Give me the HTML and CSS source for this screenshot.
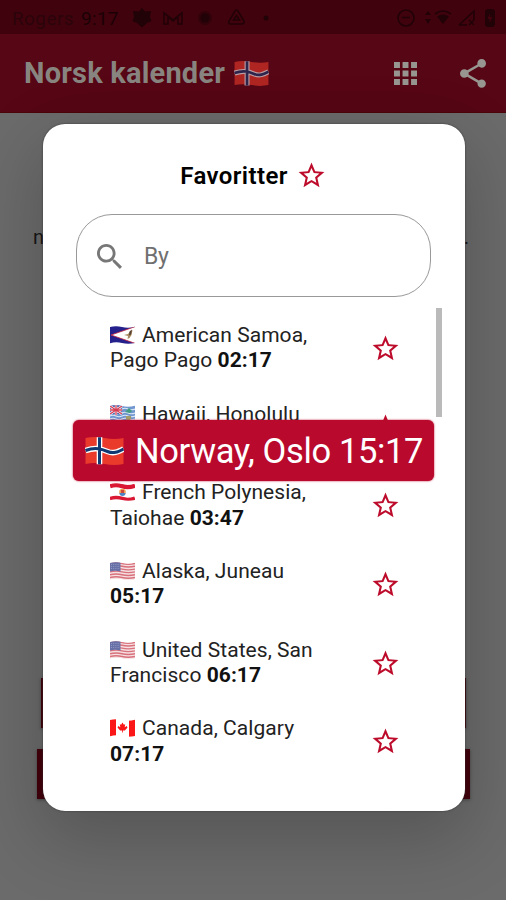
FILE: index.html
```
<!DOCTYPE html>
<html lang="no">

<head>
    <meta charset="UTF-8">
    <meta name="viewport" content="width=device-width, initial-scale=1.0">
    <title>Norsk kalender</title>
    <link rel="stylesheet" href="styles.css">
</head>

<body>
    <!-- Shared icons and flags -->
    <svg class="defs" width="0" height="0">
        <symbol id="star" viewBox="0 0 24 24">
            <path d="M22 9.24l-7.19-.62L12 2 9.19 8.63 2 9.24l5.46 4.73L5.82 21 12 17.27 18.18 21l-1.63-7.03L22 9.24zM12 15.4l-3.76 2.27 1-4.28-3.32-2.88 4.38-.38L12 6.1l1.71 4.04 4.38.38-3.32 2.88 1 4.28L12 15.4z"/>
        </symbol>
        <clipPath id="wave">
            <path d="M0 1Q6 -.5 12 1T25 .8V17Q18 18.5 12 17T0 17.200z"/>
        </clipPath>
        <symbol id="norway" viewBox="0 0 38 28">
            <path fill="#e93a2c" d="M0 1Q9 -.8 19 1T38 1V27Q29 28.800 19 27T0 27z"/>
            <path fill="none" stroke="#fff" stroke-width="5.600" d="M14 .2V27.300M0 13.500C10 10 16 12 22 14.500S32 15 38 12"/>
            <path fill="none" stroke="#123a72" stroke-width="3" d="M14 .2V27.300M0 13.500C10 10 16 12 22 14.500S32 15 38 12"/>
        </symbol>
        <symbol id="samoa" viewBox="0 0 25 18">
            <g clip-path="url(#wave)">
                <path fill="#24208c" d="M0 0h25v18H0z"/>
                <path fill="#fff" stroke="#c4223c" stroke-width=".8" d="M1 9L25.500 .5V17.500z"/>
                <path fill="#a98a63" d="M14 9l4-1 2.500-3 2-1-1 5-2 3-2 1 .5-3z"/>
                <path fill="#574231" d="M19.500 5.500l2.500-2-1 5-2 1z"/>
            </g>
        </symbol>
        <symbol id="hawaii" viewBox="0 0 25 18">
            <g clip-path="url(#wave)">
                <path fill="#7096cf" d="M0 0h25v18H0z"/>
                <path fill="none" stroke="#dce8f5" stroke-width="1.200" d="M0 11q3-1.500 6 0t6 0 6 0 7 0M0 14q3-1.500 6 0t6 0 6 0 7 0M12 4q3-1.500 6 0t7 0M12 8q3-1.500 6 0t7 0"/>
                <path fill="#3e4c98" d="M0 0h12v9H0z"/>
                <path fill="none" stroke="#fff" stroke-width="2.500" d="M0 1l12 8M12 1L0 9M6 0v10M0 5h12"/>
                <path fill="none" stroke="#d63c52" stroke-width="1.300" d="M0 1l12 8M12 1L0 9M6 0v10M0 5h12"/>
                <path fill="#409d81" d="M15 7l4-4 3 3-2 2z"/>
                <path fill="#a59d69" d="M16 11h5v3l-2.500 2-2.500-2z"/>
            </g>
        </symbol>
        <symbol id="polynesia" viewBox="0 0 25 18">
            <g clip-path="url(#wave)">
                <path fill="#fff" d="M0 0h25v18H0z"/>
                <path fill="none" stroke="#da1833" stroke-width="4.500" d="M0 3q6-2 12 0t13-.5M0 16q6-2 12 0t13-.5"/>
                <circle cx="12.500" cy="9" r="3.300" fill="#f1a252"/>
                <path fill="#4f83c4" d="M9.500 10h6a3 3 0 0 1-6 0z"/>
                <path fill="#cf493b" d="M11 7h3v3h-3z"/>
            </g>
        </symbol>
        <symbol id="usa" viewBox="0 0 25 18">
            <g clip-path="url(#wave)">
                <path fill="#f5dfe1" d="M0 0h25v18H0z"/>
                <path fill="none" stroke="#d8717c" stroke-width="1.400" d="M0 1.500q6-1.500 12 0t13 0M0 4.300q6-1.500 12 0t13 0M0 7.100q6-1.500 12 0t13 0M0 9.900q6-1.500 12 0t13 0M0 12.700q6-1.500 12 0t13 0M0 15.500q6-1.500 12 0t13 0M0 18q6-1.500 12 0t13 0"/>
                <path fill="#6770a7" d="M0 0h10.500v9.500Q5 8 0 9.500z"/>
                <path stroke="#a3a9cd" stroke-width=".7" stroke-dasharray="1 1.200" d="M1 2.500h9M1 4.500h9M1 6.500h9"/>
            </g>
        </symbol>
        <symbol id="canada" viewBox="0 0 25 18">
            <g clip-path="url(#wave)">
                <path fill="#fff" d="M0 0h25v18H0z"/>
                <path fill="#fb1717" d="M0 0h6v18H0zM19 0h6v18h-6zM12.500 3.500l1.400 2.300 1.300-.5-.5 3 2-1.200.8 1.400-2.600 3-2 .1v2h-.8v-2l-2-.1-2.600-3 .8-1.400 2 1.200-.5-3 1.300.5z"/>
            </g>
        </symbol>
    </svg>

    <div class="screen">
        <div class="status-bar">
            <span class="carrier">Rogers</span>
            <span class="clock">9:17</span>
            <svg class="notifications" viewBox="0 0 140 20">
                <path d="M10 0l3 3.500 6-.5-1 6 1.500 4-4.500 2-5 4.500L5 15l-4.500-2L2 9 1 3l6 .5z"/>
                <path class="line" d="M32 16V5l9 7 9-7v11h-4V9l-5 4-5-4v7z"/>
                <circle cx="73" cy="10" r="7" opacity=".45"/>
                <circle cx="73" cy="10" r="4.500"/>
                <path class="line" d="M103 3q1.500-2 3 0l6 10q.5 3-2 3H99q-3 0-2-3zM104.500 7.500l3 4.500h-6z"/>
                <circle cx="134" cy="10" r="2.500"/>
            </svg>
            <svg class="system" viewBox="0 0 100 20">
                <circle class="line" cx="9" cy="10" r="8"/>
                <path class="line" d="M5 9.500h8"/>
                <path d="M28 7l3-4 3 4zM28 11h6l-3 5z"/>
                <path class="line" d="M38 6q8-6 16 0"/>
                <path d="M40 8.500q6-4 12 0L46 16z"/>
                <path class="line" d="M62 17L77 3v9M62 17h8M72 12l5 5M77 12l-5 5"/>
                <rect x="88" y="1" width="10" height="18" rx="3"/>
                <path fill="#40030d" d="M93 5l-2.500 6H92.500v4l3-6H93z"/>
            </svg>
        </div>

        <header class="app-bar">
            <h1>Norsk kalender</h1>
            <svg class="app-flag"><use href="#norway"/></svg>
            <svg class="apps" viewBox="0 0 24 24">
                <path d="M0 0h6.200v6.200H0zM8.900 0h6.200v6.200H8.900zM17.800 0H24v6.200h-6.200zM0 8.900h6.200v6.200H0zM8.900 8.900h6.200v6.200H8.900zM17.800 8.900H24v6.200h-6.200zM0 17.800h6.200V24H0zM8.900 17.800h6.200V24H8.900zM17.800 17.800H24V24h-6.200z"/>
            </svg>
            <svg class="share" viewBox="3 2 18 20">
                <path d="M18 16.080c-.76 0-1.440.3-1.960.77L8.910 12.700c.05-.23.090-.46.090-.7s-.04-.47-.09-.7l7.050-4.110c.54.5 1.250.81 2.040.81 1.660 0 3-1.340 3-3s-1.340-3-3-3-3 1.340-3 3c0 .24.040.47.090.7L8.040 9.810C7.500 9.310 6.790 9 6 9c-1.660 0-3 1.340-3 3s1.340 3 3 3c.79 0 1.500-.31 2.040-.81l7.120 4.160c-.05.21-.08.43-.08.65 0 1.610 1.310 2.920 2.920 2.920s2.920-1.310 2.920-2.920-1.310-2.920-2.920-2.920z"/>
            </svg>
        </header>

        <main class="page">
            <div class="page-text"><span>n</span><span>.</span></div>
            <div class="page-button small"></div>
            <div class="page-button"></div>
        </main>
    </div>

    <div class="dialog">
        <h2>Favoritter <svg class="star"><use href="#star"/></svg></h2>
        <div class="search">
            <svg viewBox="3 3 17.500 17.500">
                <path d="M15.500 14h-.79l-.28-.27C15.410 12.590 16 11.110 16 9.500 16 5.910 13.090 3 9.500 3S3 5.910 3 9.500 5.910 16 9.500 16c1.610 0 3.090-.59 4.230-1.570l.27.28v.79l5 4.990L20.490 19l-4.990-5zm-6 0C7.010 14 5 11.990 5 9.500S7.010 5 9.500 5 14 7.010 14 9.500 11.990 14 9.500 14z"/>
            </svg>
            <span>By</span>
        </div>
        <div class="list">
            <ul>
                <li>
                    <p><svg class="flag"><use href="#samoa"/></svg>American Samoa,<br>Pago Pago <b>02:17</b></p>
                    <svg class="star"><use href="#star"/></svg>
                </li>
                <li>
                    <p><svg class="flag"><use href="#hawaii"/></svg>Hawaii, Honolulu<br>&nbsp;</p>
                    <svg class="star"><use href="#star"/></svg>
                </li>
                <li>
                    <p><svg class="flag"><use href="#polynesia"/></svg>French Polynesia,<br>Taiohae <b>03:47</b></p>
                    <svg class="star"><use href="#star"/></svg>
                </li>
                <li>
                    <p><svg class="flag"><use href="#usa"/></svg>Alaska, Juneau<br><b>05:17</b></p>
                    <svg class="star"><use href="#star"/></svg>
                </li>
                <li>
                    <p><svg class="flag"><use href="#usa"/></svg>United States, San<br>Francisco <b>06:17</b></p>
                    <svg class="star"><use href="#star"/></svg>
                </li>
                <li>
                    <p><svg class="flag"><use href="#canada"/></svg>Canada, Calgary<br><b>07:17</b></p>
                    <svg class="star"><use href="#star"/></svg>
                </li>
            </ul>
            <div class="scrollbar"></div>
        </div>
    </div>

    <div class="toast">
        <svg><use href="#norway"/></svg>
        <span>Norway, Oslo 15:17</span>
    </div>
</body>

</html>
```
FILE: styles.css
```
* {
    box-sizing: border-box;
}

body {
    position: relative;
    width: 506px;
    height: 900px;
    margin: 0;
    overflow: hidden;
    font-family: Roboto, sans-serif;
    background-color: #6b6b6b;
}

svg {
    display: block;
    flex: none;
}

.defs {
    position: absolute;
}

h1,
h2,
p,
ul {
    margin: 0;
    padding: 0;
}

/* Dimmed page behind the dialog */
.status-bar {
    display: flex;
    align-items: center;
    height: 34px;
    padding: 2px 9px 0 12px;
    background-color: #40030d;
    color: #1b0105;
    fill: #200207;
    font-size: 19px;
}

.carrier {
    width: 69px;
    color: #2b030a;
    letter-spacing: 0.4px;
}

.clock {
    width: 51px;
    letter-spacing: 0.3px;
}

.notifications {
    width: 140px;
    height: 20px;
}

.system {
    width: 100px;
    height: 20px;
    margin-left: auto;
}

.line {
    fill: none;
    stroke: #200207;
    stroke-width: 1.6;
}

.app-bar {
    display: flex;
    align-items: center;
    height: 79px;
    padding: 0 20px 0 24px;
    background-color: #560615;
    border-bottom: 1px solid #4c0508;
    color: #888580;
    fill: #989690;
}

.app-bar h1 {
    width: 210px;
    font-size: 29px;
    font-weight: 700;
    letter-spacing: 0.2px;
    white-space: nowrap;
}

.app-flag {
    width: 35px;
    height: 25px;
    opacity: 0.6;
}

.apps {
    width: 23px;
    height: 23px;
    margin-left: auto;
}

.share {
    width: 26px;
    height: 29px;
    margin-left: 43px;
}

.page {
    padding-top: 112px;
}

.page-text {
    display: flex;
    justify-content: space-between;
    height: 453px;
    padding: 0 37px 0 33px;
    color: #171717;
    font-size: 20px;
}

.page-button {
    height: 50px;
    margin: 0 36px 0 37px;
    background-color: #42000c;
    box-shadow: 0 1px 3px #444;
}

.page-button.small {
    margin: 0 40px 21px 41px;
}

/* Favourites dialog */
.dialog {
    position: absolute;
    top: 124px;
    left: 43px;
    width: 422px;
    height: 687px;
    padding: 35px 23px 0 33px;
    border-radius: 22px;
    background-color: #fff;
    box-shadow: 0 0 2px #333, 0 25px 70px 5px rgba(0, 0, 0, 0.2);
}

.star {
    width: 31px;
    height: 31px;
    fill: #bd0c2b;
}

h2 {
    display: flex;
    align-items: center;
    justify-content: center;
    gap: 8px;
    height: 33px;
    padding-right: 11px;
    font-size: 24px;
    font-weight: 600;
    letter-spacing: 0.4px;
}

.search {
    display: flex;
    align-items: center;
    gap: 22px;
    width: 355px;
    height: 83px;
    margin-top: 22px;
    padding: 1px 0 0 20px;
    border: 1px solid #999;
    border-radius: 36px;
    color: #707070;
    fill: #777;
    font-size: 23px;
    letter-spacing: -0.3px;
}

.search svg {
    width: 25px;
    height: 25px;
}

.list {
    display: flex;
    justify-content: space-between;
    height: 470px;
    margin-top: 11px;
    padding-left: 34px;
}

ul {
    width: 291px;
    padding-top: 1px;
    list-style: none;
}

li {
    display: flex;
    align-items: center;
    justify-content: space-between;
    height: 78.7px;
}

li p {
    color: #222;
    font-size: 21px;
    line-height: 25.5px;
    letter-spacing: 0.05px;
    white-space: nowrap;
}

b {
    color: #111;
    font-weight: 700;
}

.flag {
    display: inline-block;
    width: 25px;
    height: 18px;
    margin-right: 7px;
    vertical-align: -2px;
}

.scrollbar {
    width: 6px;
    height: 109px;
    background-color: #bababa;
}

/* Selected city, floats over the list */
.toast {
    position: absolute;
    top: 420px;
    left: 73px;
    display: flex;
    align-items: center;
    gap: 11px;
    width: 361px;
    height: 61px;
    padding-left: 12px;
    border-radius: 6px;
    background-color: #b9092d;
    box-shadow: 0 0 2px #b9092d;
    color: #fff;
    font-size: 34.5px;
    letter-spacing: -0.37px;
    white-space: nowrap;
}

.toast svg {
    width: 39px;
    height: 28px;
}
```
